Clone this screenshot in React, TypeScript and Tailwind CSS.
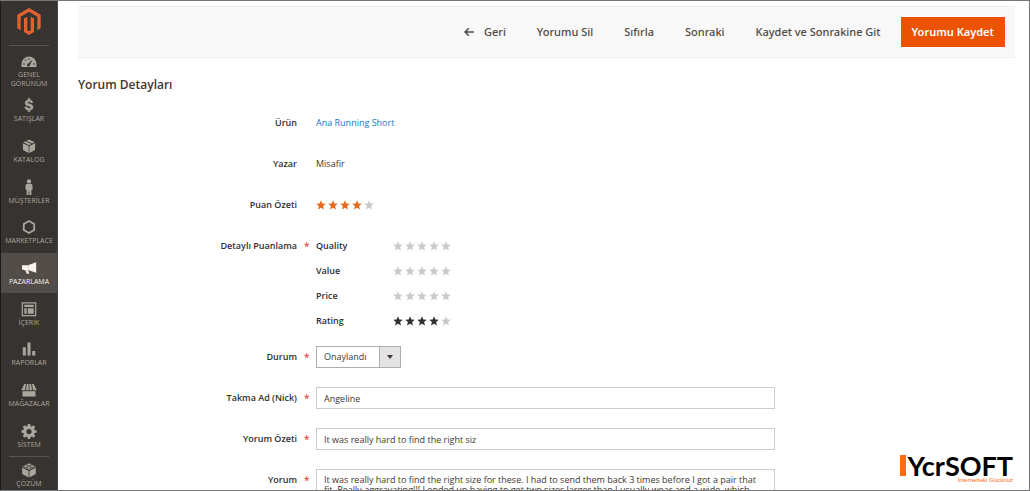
import React from "react";
import type { ReactNode } from "react";

type NavItem = { label: string; icon: ReactNode; active?: boolean };

function Icon({ children }: { children: ReactNode }) {
  return (
    <svg viewBox="0 0 16 16" className="h-4 w-4 shrink-0" fill="currentColor" aria-hidden="true">
      {children}
    </svg>
  );
}

const items: NavItem[] = [
  {
    label: "SATIŞLAR",
    icon: (
      <path
        stroke="currentColor"
        strokeWidth=".5"
        d="M7.2 1.2h1.6v1.7c1.7.2 2.8 1.2 3.1 2.9H9.6c-.2-.8-.8-1.2-1.6-1.2-.9 0-1.5.4-1.5 1 0 .7.5 1 2 1.4 2.4.5 3.6 1.4 3.6 3.2 0 1.6-1.2 2.7-3.2 2.9v1.7H7.2v-1.7c-2-.2-3.2-1.3-3.4-3.2h2.3c.2 1 .9 1.5 2 1.5 1 0 1.6-.4 1.6-1.1s-.5-1-2.1-1.3C5.3 8.500 4.100 7.600 4.100 5.900c0-1.600 1.200-2.800 3.100-3z"
      />
    ),
  },
  {
    label: "KATALOG",
    icon: (
      <>
        <path d="M1.800 5.200 7.600 8v7L2 11.900z" />
        <path d="M14.200 5.200 8.400 8v7l5.600-3.100z" />
        <path d="M2.300 4.300 4.600 3.200l5.700 2.900L8 7.200z" />
        <path d="m5.500 2.700 2.500-1.200 5.700 2.800-2.500 1.300z" />
      </>
    ),
  },
  {
    label: "MÜŞTERİLER",
    icon: (
      <>
        <circle cx="8" cy="2.400" r="2.200" />
        <path d="M6.200 5h3.600c1 0 1.700.7 1.700 1.700v4H10.400V16H8.400v-3.500h-.8V16h-2v-5.300H4.500v-4C4.500 5.700 5.200 5 6.200 5z" />
      </>
    ),
  },
  {
    label: "MARKETPLACE",
    icon: (
      <path d="M8 2 13.200 5v6L8 14l-5.200-3V5z" fill="none" stroke="currentColor" strokeWidth="1.800" />
    ),
  },
  {
    label: "PAZARLAMA",
    active: true,
    icon: (
      <>
        <path d="M15.200 2.200v10.600L7.600 10.200V5z" />
        <path d="M1 5.200h6.800v5H3.600L1 9.200z" />
        <path d="M4.200 10.300h3l1 3.500H5.900z" />
      </>
    ),
  },
  {
    label: "İÇERİK",
    icon: (
      <>
        <path d="M1.300 1.800h13.400v12.900H1.300z" fill="none" stroke="currentColor" strokeWidth="1.200" />
        <path d="M3.300 3.800h9.400V6H3.300zM3.300 7.300h2.400v5.400H3.300zM6.800 7.300h5.900v5.400H6.800z" />
      </>
    ),
  },
  {
    label: "RAPORLAR",
    icon: <path d="M1.800 6.300h3v8.200h-3zM6.500 1.500h3v13h-3zM11.200 10h3v4.500h-3z" />,
  },
  {
    label: "MAĞAZALAR",
    icon: (
      <>
        <path d="M3.300 2h1.700L4 8.200H.3zM5.900 2h1.700v6.200H4.900zM8.400 2h1.700l1 6.200H8.400zM11 2h1.700l3 6.200H12z" />
        <path d="M1.500 9.200h13v5.300h-13z" />
      </>
    ),
  },
  {
    label: "SİSTEM",
    icon: (
      <path
        fillRule="evenodd"
        d="M6.800 1h2.400l.4 1.900 1.200.5 1.700-1.100 1.700 1.700-1.100 1.700.5 1.200 1.900.4v2.400l-1.900.4-.5 1.200 1.100 1.700-1.700 1.700-1.700-1.100-1.200.5-.4 1.900H6.800l-.4-1.900-1.200-.5-1.700 1.100-1.700-1.700 1.100-1.700-.5-1.200L.5 9.700V7.300l1.900-.4.5-1.200L1.800 4l1.700-1.700 1.700 1.100 1.200-.5zM8 5.900a2.600 2.600 0 1 0 0 5.200 2.600 2.600 0 0 0 0-5.200z"
      />
    ),
  },
];

function NavLink({ label, icon, active }: NavItem) {
  return (
    <a
      href="#"
      className={
        active
          ? "flex h-full flex-col items-center justify-center gap-px bg-[#524d49] font-medium text-[#f7f3eb]"
          : "flex h-full flex-col items-center justify-center gap-px text-[#aaa69d]"
      }
    >
      <Icon>{icon}</Icon>
      <span className="text-center text-[7px] leading-[9px] whitespace-nowrap">{label}</span>
    </a>
  );
}

function Sidebar() {
  return (
    <nav className="flex w-[58px] shrink-0 flex-col border-r border-l border-r-[#4a4642] border-l-[#1c1a18] bg-[#373330]">
      <a href="#" aria-label="Magento" className="flex h-11 shrink-0 items-start justify-center pt-[7px]">
        <svg viewBox="0 0 448 512" className="h-[27px] w-6" fill="#e0632f" aria-hidden="true">
          <path d="M445.700 127.900V384l-63.400 36.500V164.700L223.800 73.100 65.200 164.700l.4 255.900L2.300 384V128.100L224.200 0l221.500 127.900zM255.600 420.500L224 438.900l-31.800-18.200v-256l-63.300 36.600.1 255.900 94.900 54.900 95.100-54.900v-256l-63.400-36.600v255.900z" />
        </svg>
      </a>
      <hr className="mx-2 border-[#5a5552]" />
      <a href="#" className="flex h-11 shrink-0 flex-col items-center pt-2 text-[#aaa69d]">
        <Icon>
          <path
            fillRule="evenodd"
            d="M8 2.500a7.500 7.500 0 0 1 7.500 7.500v3H.5v-3A7.500 7.500 0 0 1 8 2.500zM11.800 5.300 7.300 9.600a1.500 1.500 0 1 0 1.700 1.200zM7.500 4h1v1.800h-1zM3.600 5.900l.7-.7 1.200 1.200-.7.7zM2 9.400h1.800v1H2zM12.200 9.400H14v1h-1.800z"
          />
        </Icon>
        <span className="text-center text-[7px] leading-[9px]">
          GENEL
          <br />
          GÖRÜNÜM
        </span>
      </a>
      <ul className="grid h-[366px] shrink-0 auto-rows-fr">
        {items.map((item) => (
          <li key={item.label}>
            <NavLink {...item} />
          </li>
        ))}
      </ul>
      <hr className="mx-2 shrink-0 border-[#5a5552]" />
      <div className="h-9 shrink-0">
        <NavLink
          label="ÇÖZÜM"
          icon={
            <>
              <path d="M1.200 5.600 7.600 9v6.500L1.200 12zM14.800 5.600 8.400 9v6.500l6.400-3.500z" />
              <path d="M8 1 14.500 4.500 8 8 1.500 4.500z" />
              <g fill="#aaa69d" stroke="#373330" strokeWidth=".6">
                <ellipse cx="8" cy="2.500" rx="2" ry="1.200" />
                <ellipse cx="4.800" cy="4.300" rx="2" ry="1.200" />
                <ellipse cx="11.200" cy="4.300" rx="2" ry="1.200" />
                <ellipse cx="8" cy="6.100" rx="2" ry="1.200" />
              </g>
            </>
          }
        />
      </div>
    </nav>
  );
}

function Toolbar() {
  return (
    <div className="flex h-[52px] shrink-0 items-center justify-end gap-[31px] border-y border-[#f0f0f0] bg-[#f8f8f8] pr-[10px] font-['Noto_Sans',sans-serif] text-[11px] font-medium text-[#514943]">
      <button type="button" className="flex items-center gap-[10px]">
        <svg viewBox="0 0 10 10" className="h-[10px] w-[10px]" fill="none" stroke="currentColor" strokeWidth="1.500" aria-hidden="true">
          <path d="M9.800 5H1M4.800 1.200 1 5l3.800 3.800" />
        </svg>
        Geri
      </button>
      <button type="button">Yorumu Sil</button>
      <button type="button">Sıfırla</button>
      <button type="button">Sonraki</button>
      <button type="button">Kaydet ve Sonrakine Git</button>
      <button type="button" className="-ml-[11px] h-[30px] bg-[#eb5202] px-[11px] font-semibold text-white">
        Yorumu Kaydet
      </button>
    </div>
  );
}

const STAR = "M5 .3 6.300 3.600l3.500.2-2.700 2.300.9 3.500L5 7.700 2 9.600l.9-3.500L.2 3.800l3.500-.2z";

function Stars({ value, color }: { value: number; color: string }) {
  return (
    <span role="img" aria-label={`${value} / 5`} className="flex gap-[2px]">
      {[1, 2, 3, 4, 5].map((n) => (
        <svg key={n} viewBox="0 0 10 10" className="h-[10px] w-[10px]" fill={n <= value ? color : "#cacaca"}>
          <path d={STAR} />
        </svg>
      ))}
    </span>
  );
}

function Row({ label, id, required, children }: { label: string; id?: string; required?: boolean; children: ReactNode }) {
  const text = "flex h-[22px] w-[25.400%] shrink-0 items-center justify-end pr-[7px] font-semibold text-[#303030]";
  const content = (
    <>
      {label}
      <span className="w-3 pl-[7px] text-[10px] font-normal text-[#e22626]">{required ? "*" : ""}</span>
    </>
  );
  return (
    <div className="flex items-start">
      {id ? (
        <label htmlFor={id} className={text}>
          {content}
        </label>
      ) : (
        <div className={text}>{content}</div>
      )}
      <div className="flex min-h-[22px] w-[49%] items-center">{children}</div>
    </div>
  );
}

const ratings = [
  { name: "Quality", value: 0 },
  { name: "Value", value: 0 },
  { name: "Price", value: 0 },
  { name: "Rating", value: 4 },
];

const field = "w-full border border-[#cccccc] bg-white px-[7px] text-[9px] text-[#41362f] outline-none";

export default function App() {
  return (
    <div className="relative flex h-screen overflow-hidden border-y border-r border-[#77777a] bg-white font-['Open_Sans',sans-serif] text-[9px] text-[#41362f]">
      <Sidebar />
      <main className="min-w-0 flex-1 pt-[5px] pr-[14px] pl-5">
        <Toolbar />
        <h1 className="mt-[18px] text-[12px] leading-[18px] font-semibold">Yorum Detayları</h1>
        <form className="mt-[18px] flex flex-col gap-[19px]">
          <Row label="Ürün">
            <a href="#" className="text-[#1979c3]">
              Ana Running Short
            </a>
          </Row>
          <Row label="Yazar">Misafir</Row>
          <Row label="Puan Özeti">
            <Stars value={4} color="#e2691b" />
          </Row>
          <Row label="Detaylı Puanlama" required>
            <div className="-mb-1 grid grid-cols-[77px_auto] items-center gap-y-[5px] pt-px">
              {ratings.map((r) => (
                <React.Fragment key={r.name}>
                  <span className="h-5 leading-5 font-semibold text-[#303030]">{r.name}</span>
                  <Stars value={r.value} color="#303030" />
                </React.Fragment>
              ))}
            </div>
          </Row>
          <Row label="Durum" id="status" required>
            <div className="relative">
              <select
                id="status"
                className="block h-[22px] w-[85px] appearance-none border border-[#adadad] bg-white pl-[7px] text-[9px] text-[#41362f] outline-none"
              >
                <option>Onaylandı</option>
              </select>
              <span className="pointer-events-none absolute inset-y-0 right-0 flex w-[22px] items-center justify-center border border-[#adadad] bg-[#e3e3e3]">
                <svg viewBox="0 0 6 4" className="h-1 w-[6px]" fill="#41362f">
                  <path d="M0 0h6L3 4z" />
                </svg>
              </span>
            </div>
          </Row>
          <Row label="Takma Ad (Nick)" id="nick" required>
            <input id="nick" type="text" defaultValue="Angeline" className={`${field} h-[22px]`} />
          </Row>
          <Row label="Yorum Özeti" id="summary" required>
            <input id="summary" type="text" defaultValue="It was really hard to find the right siz" className={`${field} h-[22px]`} />
          </Row>
          <Row label="Yorum" id="review" required>
            <textarea
              id="review"
              rows={6}
              defaultValue="It was really hard to find the right size for these. I had to send them back 3 times before I got a pair that fit. Really aggravating!!! I ended up having to get two sizes larger than I usually wear and a wide, which"
              className={`${field} resize-none overflow-hidden pt-[5px] leading-[10px]`}
            />
          </Row>
        </form>
      </main>
      <div className="absolute right-4 bottom-[6px] flex items-start gap-px">
        <span className="mt-[1px] h-[21px] w-[6px] bg-[#ff6a13]" />
        <div className="flex flex-col items-end font-['Lato',sans-serif]">
          <span className="text-[27px] leading-[23px] font-bold text-black">YcrSOFT</span>
          <span className="font-['Liberation_Sans',sans-serif] text-[6px] leading-[7px] text-[#ff6a13]">İnternetteki Gücünüz</span>
        </div>
      </div>
    </div>
  );
}
